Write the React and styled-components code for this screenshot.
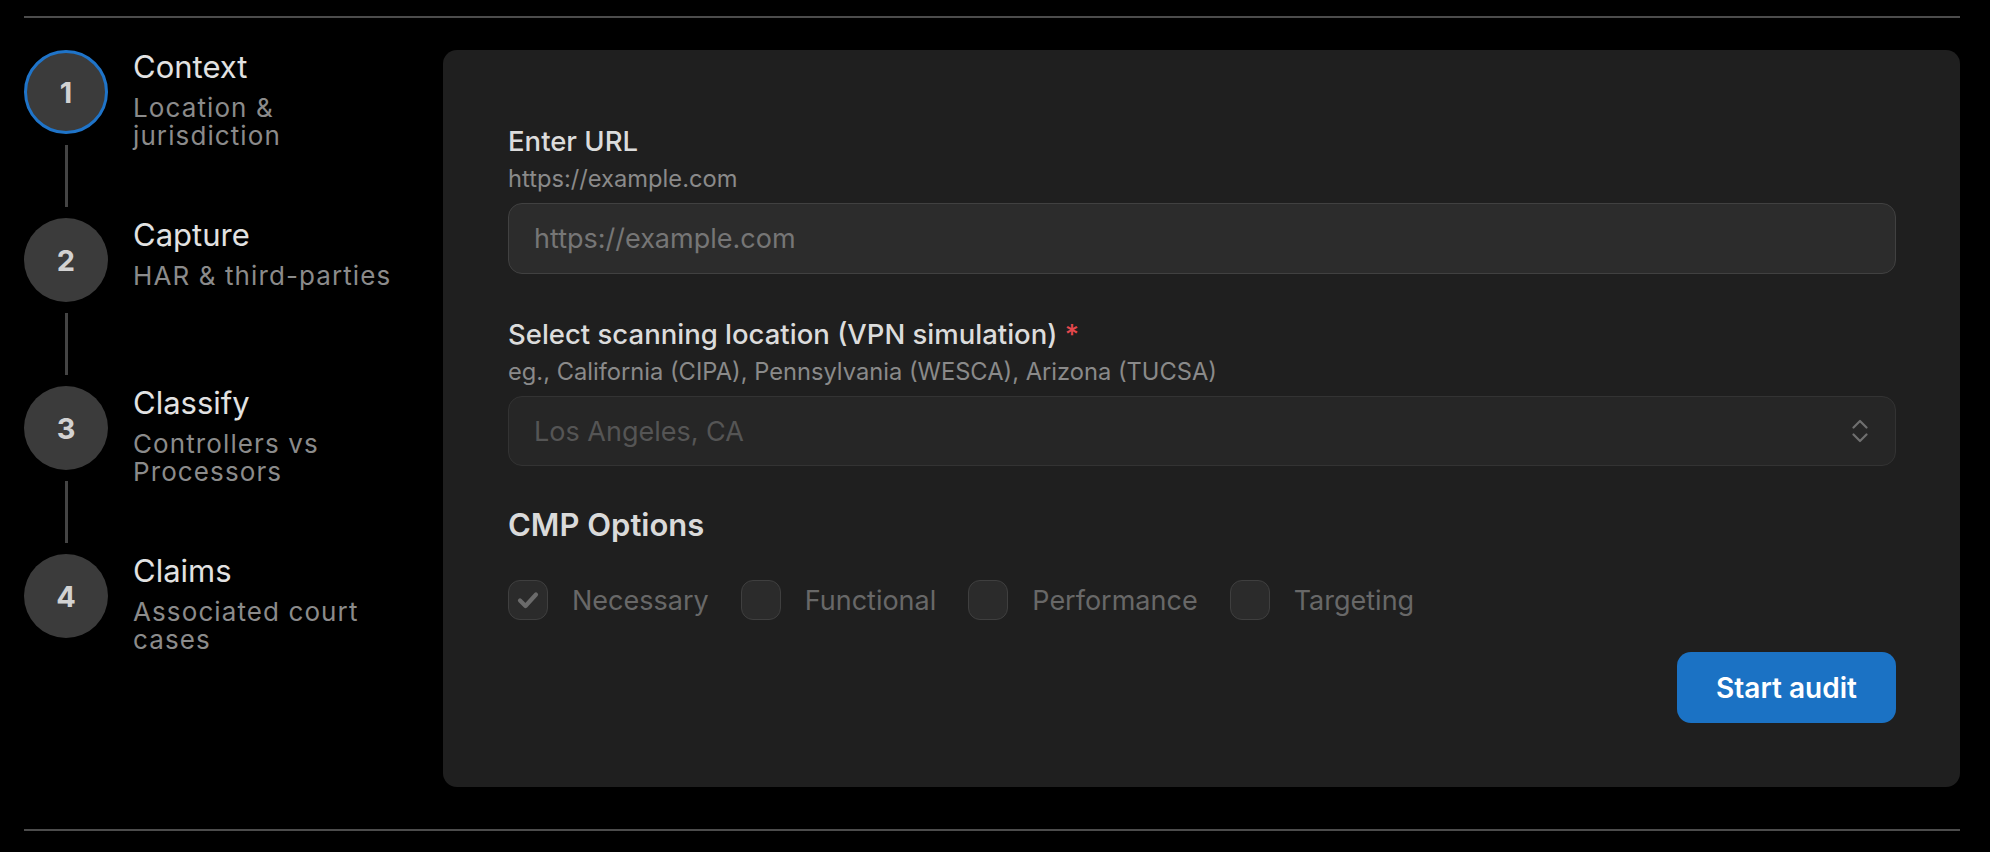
import React from 'react';
import { styled, createGlobalStyle } from 'styled-components';

const GlobalStyle = createGlobalStyle`
  body {
    margin: 0;
    background: #000;
    font-family: Inter, "Noto Sans", "Liberation Sans", sans-serif;
  }
`;

const Page = styled.div`
  padding: 16px 30px 0 24px;
`;

const Frame = styled.div`
  display: grid;
  grid-template-columns: 419px 1fr;
  padding: 32px 0 42px;
  border-top: 2px solid #4c4c4c;
  border-bottom: 2px solid #4c4c4c;
`;

const Steps = styled.div`
  display: flex;
  flex-direction: column;
`;

const Step = styled.div`
  display: flex;
  gap: 25px;
`;

const Rail = styled.div`
  display: flex;
  flex-direction: column;
  align-items: center;
  width: 84px;
  flex-shrink: 0;
`;

const Circle = styled.div`
  box-sizing: border-box;
  width: 84px;
  height: 84px;
  border-radius: 50%;
  background: #3b3b3b;
  border: 3px solid ${(p) => (p.$active ? '#1f74c9' : 'transparent')};
  display: flex;
  align-items: center;
  justify-content: center;
  color: #d2d2d2;
  font-size: 29px;
  font-weight: 700;
`;

const Connector = styled.div`
  width: 3px;
  height: 62px;
  margin: 11px 0;
  background: #444;
`;

const StepText = styled.div`
  display: flex;
  flex-direction: column;
`;

const StepTitle = styled.div`
  font-size: 31px;
  line-height: 34px;
  color: #e2e2e2;
`;

const StepSub = styled.div`
  margin-top: 10px;
  font-size: 26px;
  letter-spacing: 1.1px;
  line-height: 28px;
  color: #8b8b8b;
  max-width: 275px;
`;

const Card = styled.div`
  background: #1f1f1f;
  border-radius: 14px;
  padding: 75px 64px 64px 65px;
  display: flex;
  flex-direction: column;
`;

const Field = styled.div`
  display: flex;
  flex-direction: column;
  & + & {
    margin-top: 44px;
  }
`;

const Label = styled.div`
  font-size: 27.5px;
  line-height: 32px;
  font-weight: 500;
  color: #dcdcdc;
`;

const Required = styled.span`
  color: #e5484d;
`;

const Hint = styled.div`
  margin-top: 8px;
  font-size: 23.7px;
  line-height: 28px;
  color: #8a8a8a;
`;

const TextInput = styled.input`
  box-sizing: border-box;
  margin-top: 10px;
  width: 100%;
  height: 71px;
  padding: 0 25px;
  border-radius: 14px;
  border: 1.5px solid #414141;
  background: #2c2c2c;
  color: #ddd;
  font-family: inherit;
  font-size: 27px;
  outline: none;
  &::placeholder {
    color: #767676;
  }
`;

const SelectBox = styled.div`
  box-sizing: border-box;
  margin-top: 10px;
  height: 70px;
  padding: 0 27px 0 25px;
  border-radius: 14px;
  border: 1.5px solid #333;
  background: #262626;
  display: flex;
  align-items: center;
  justify-content: space-between;
  font-size: 27px;
  color: #555;
`;

const SectionTitle = styled.div`
  margin-top: 42px;
  font-size: 31px;
  line-height: 34px;
  font-weight: 600;
  color: #dadada;
`;

const Options = styled.div`
  margin-top: 38px;
  display: flex;
  gap: 32px;
`;

const Option = styled.label`
  display: flex;
  align-items: center;
  gap: 24px;
  font-size: 27px;
  color: #686868;
`;

const Box = styled.span`
  box-sizing: border-box;
  width: 40px;
  height: 40px;
  border-radius: 12px;
  border: 1.5px solid #3f3f3f;
  background: #2b2b2b;
  display: flex;
  align-items: center;
  justify-content: center;
`;

const Actions = styled.div`
  margin-top: 32px;
  display: flex;
  justify-content: flex-end;
`;

const Button = styled.button`
  width: 219px;
  height: 71px;
  border: none;
  border-radius: 14px;
  background: #1b72c4;
  color: #fff;
  font-family: inherit;
  font-size: 28px;
  font-weight: 600;
`;

const steps = [
  { n: 1, title: 'Context', sub: 'Location & jurisdiction' },
  { n: 2, title: 'Capture', sub: 'HAR & third-parties' },
  { n: 3, title: 'Classify', sub: 'Controllers vs Processors' },
  { n: 4, title: 'Claims', sub: 'Associated court cases' },
];

const cmp = [
  { label: 'Necessary', checked: true },
  { label: 'Functional' },
  { label: 'Performance' },
  { label: 'Targeting' },
];

function App() {
  return (
    <Page>
      <GlobalStyle />
      <Frame>
        <Steps>
          {steps.map((s, i) => (
            <Step key={s.n}>
              <Rail>
                <Circle $active={i === 0}>{s.n}</Circle>
                {i < steps.length - 1 && <Connector />}
              </Rail>
              <StepText>
                <StepTitle>{s.title}</StepTitle>
                <StepSub>{s.sub}</StepSub>
              </StepText>
            </Step>
          ))}
        </Steps>

        <Card>
          <Field>
            <Label>Enter URL</Label>
            <Hint>https://example.com</Hint>
            <TextInput placeholder="https://example.com" />
          </Field>
          <Field>
            <Label>
              Select scanning location (VPN simulation) <Required>*</Required>
            </Label>
            <Hint>eg., California (CIPA), Pennsylvania (WESCA), Arizona (TUCSA)</Hint>
            <SelectBox>
              <span>Los Angeles, CA</span>
              <svg width="16" height="24" viewBox="0 0 16 24" fill="none" stroke="#6f6f6f" strokeWidth="2.2" strokeLinecap="round" strokeLinejoin="round">
                <polyline points="1.5,8.5 8,2 14.5,8.5" />
                <polyline points="1.5,15.5 8,22 14.5,15.5" />
              </svg>
            </SelectBox>
          </Field>

          <SectionTitle>CMP Options</SectionTitle>
          <Options>
            {cmp.map((o) => (
              <Option key={o.label}>
                <Box>
                  {o.checked && (
                    <svg width="24" height="24" viewBox="0 0 24 24" fill="none" stroke="#6b6b6b" strokeWidth="4.2" strokeLinecap="round" strokeLinejoin="round">
                      <polyline points="4,12.5 9.5,18 20,6.5" />
                    </svg>
                  )}
                </Box>
                {o.label}
              </Option>
            ))}
          </Options>

          <Actions>
            <Button>Start audit</Button>
          </Actions>
        </Card>
      </Frame>
    </Page>
  );
}

export default App;
